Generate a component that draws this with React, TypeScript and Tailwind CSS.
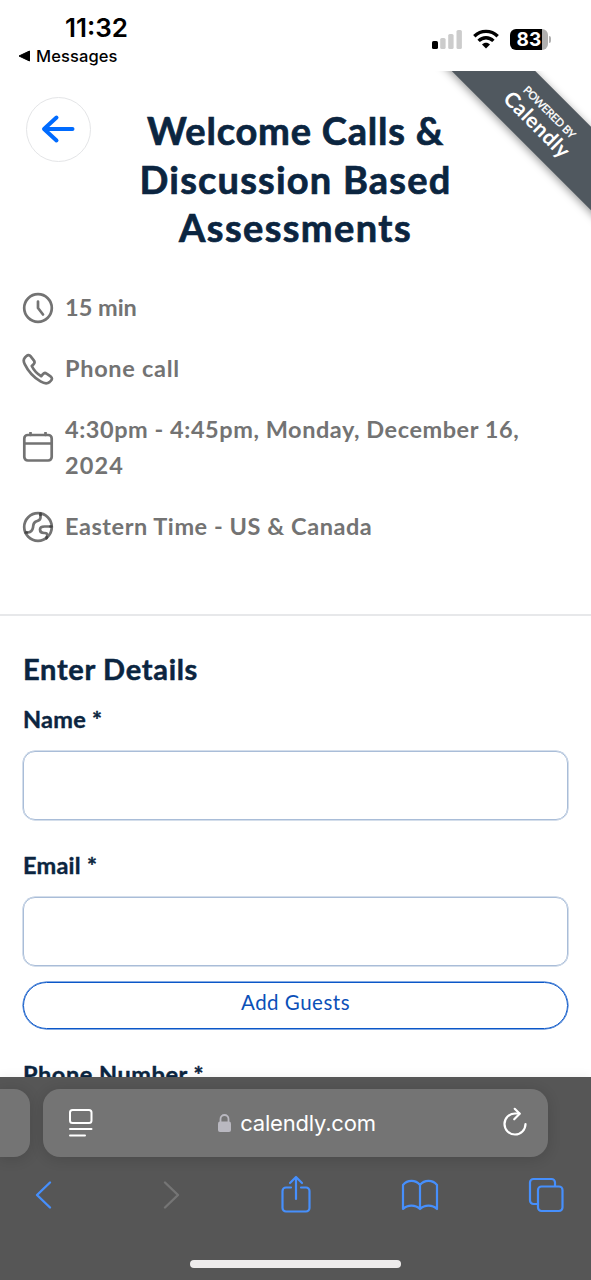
import type { ReactNode } from "react"

function StatusBar() {
  return (
    <div className="flex h-[71px] justify-between font-['Inter','Liberation_Sans',sans-serif] text-black">
      <div className="pl-[18px] pt-3">
        <div className="pl-[47px] text-[26px] leading-[31px] font-semibold">11:32</div>
        <div className="mt-[3px] flex items-center gap-[6px] text-[16.5px] leading-5 font-medium tracking-[0.1px]">
          <svg width="12" height="12" viewBox="0 0 12 12">
            <path d="M11.5 1v10L1 6z" fill="currentColor" stroke="currentColor" strokeLinejoin="round" />
          </svg>
          Messages
        </div>
      </div>
      <div className="flex items-start pr-10 pt-[28px]">
        <svg className="mt-[2px]" width="30" height="20" viewBox="0 0 30 20">
          <rect x="0" y="11" width="6" height="8" rx="1.6" fill="#000" />
          <rect x="8.2" y="8" width="5.4" height="11" rx="1.6" fill="#ccc" />
          <rect x="16.2" y="4" width="5.4" height="15" rx="1.6" fill="#ccc" />
          <rect x="24.5" y="0" width="5.4" height="19" rx="1.6" fill="#ccc" />
        </svg>
        <svg className="ml-[11px] mt-[1px]" width="26" height="20" viewBox="0 0 26 20" fill="none" stroke="#000" strokeWidth="3.4">
          <path d="M1.3 7.2C8 .8 18 .8 24.7 7.2" />
          <path d="M5.6 11.9c4.3-4.2 10.5-4.2 14.8 0" />
          <path d="M13 19.4l-4-4c2.2-2.3 5.8-2.3 8 0z" fill="#000" stroke="none" />
        </svg>
        <div className="ml-[11px] mt-[1px] flex h-[21px] w-[38px] items-center justify-center overflow-hidden rounded-[6px] bg-[linear-gradient(90deg,#000_84%,#b0b0b0_84%)] text-[19px] leading-none font-bold tracking-[0.3px] text-white">
          83
        </div>
        <div className="ml-[1px] mt-[8px] h-[7px] w-[2px] rounded-r-full bg-[#b0b0b0]" />
      </div>
    </div>
  )
}

function Ribbon() {
  return (
    <div className="absolute top-[71px] right-0 h-[200px] w-[200px] overflow-hidden">
      <div className="absolute top-[19px] left-[-9px] flex h-[59px] w-[320px] rotate-45 flex-col items-center justify-center bg-[#50585f] text-white shadow-[0_2px_9px_rgba(0,0,0,0.4)]">
        <span className="text-[11px] leading-[15px] font-medium tracking-[-0.3px] [-webkit-text-stroke:0.25px_currentColor]">POWERED BY</span>
        <span className="mb-[2px] text-[21px] leading-[20px] font-bold tracking-[0.4px]">Calendly</span>
      </div>
    </div>
  )
}

function Detail({ icon, children }: { icon: ReactNode; children: ReactNode }) {
  return (
    <div className="flex items-center">
      <svg className="mt-px shrink-0" width="32" height="32" viewBox="0 0 32 32" fill="none" stroke="currentColor" strokeWidth="2.7" strokeLinecap="round" strokeLinejoin="round">
        {icon}
      </svg>
      <div className="ml-[11px]">{children}</div>
    </div>
  )
}

function Field({ label }: { label: string }) {
  return (
    <label className="block">
      <span className="block h-9 text-[23.5px] leading-9 font-bold tracking-[0.25px] [-webkit-text-stroke:0.4px_currentColor]">{label}</span>
      <input className="mt-[14px] block h-[69px] w-full rounded-[12px] border border-[#a9bdd8] px-4 shadow-[0_0_0_0.5px_#a9bdd8] outline-none" />
    </label>
  )
}

function BrowserBar() {
  return (
    <div className="absolute inset-x-0 bottom-0 h-[203px] overflow-hidden bg-[#565656] font-['Inter','Liberation_Sans',sans-serif] shadow-[0_-1px_10px_rgba(0,0,0,0.06)]">
      <div className="mt-3 flex gap-[13px]">
        <div className="h-[68px] w-[30px] rounded-r-[16px] bg-[#747474] shadow-[0_2px_14px_rgba(0,0,0,0.14)]" />
        <div className="flex h-[68px] w-[505px] items-center rounded-[17px] bg-[#747474] pr-[21px] pl-[26px] text-white shadow-[0_2px_14px_rgba(0,0,0,0.14)]">
          <svg width="24" height="28" viewBox="0 0 24 28" fill="none" stroke="currentColor" strokeWidth="2" strokeLinecap="round">
            <rect x="1" y="1" width="21.5" height="13" rx="2.5" />
            <path d="M1 20h21.5M1 26.5h15" />
          </svg>
          <div className="flex flex-1 items-center justify-center pr-[2px] text-[22px] tracking-[-0.2px]">
            <svg className="mr-[9px]" width="13" height="18" viewBox="0 0 13 18">
              <path d="M2.5 9V5a4 4 0 0 1 8 0v4" fill="none" stroke="#b9b8c0" strokeWidth="1.8" />
              <rect y="7.5" width="13" height="10.5" rx="2" fill="#b9b8c0" />
            </svg>
            calendly.com
          </div>
          <svg className="-mt-[3px]" width="24" height="30" viewBox="0 0 24 30" fill="none" stroke="currentColor" strokeWidth="2.2" strokeLinecap="round" strokeLinejoin="round">
            <path d="M22.5 17A10.5 10.5 0 1 1 12 6.5h4.500" />
            <path d="M11.700 1.800l5 5-5.500 5.500" />
          </svg>
        </div>
      </div>
      <div className="mt-[18px] flex h-10 items-center justify-between pr-[27px] pl-[34px] text-[#468ffc]">
        <svg width="20" height="30" viewBox="0 0 20 30" fill="none" stroke="currentColor" strokeWidth="2.4" strokeLinecap="round" strokeLinejoin="round">
          <path d="M16 2.500L3 15l13 12.500" />
        </svg>
        <svg className="ml-[39px]" width="20" height="30" viewBox="0 0 20 30" fill="none" stroke="#757575" strokeWidth="2.4" strokeLinecap="round" strokeLinejoin="round">
          <path d="M3 2.500L16 15 3 27.500" />
        </svg>
        <svg className="-mt-[2px] ml-[30px]" width="30" height="38" viewBox="0 0 30 38" fill="none" stroke="currentColor" strokeWidth="2.2" strokeLinecap="round" strokeLinejoin="round">
          <path d="M10 12.500H5a3.500 3.500 0 0 0-3.500 3.500v17A3.500 3.500 0 0 0 5 36.500h20a3.500 3.500 0 0 0 3.500-3.500V16a3.500 3.500 0 0 0-3.500-3.500h-5M15 24V2M9 8l6-6 6 6" />
        </svg>
        <svg className="ml-[22px]" width="38" height="32" viewBox="0 0 38 32" fill="none" stroke="currentColor" strokeWidth="2.2" strokeLinejoin="round">
          <path d="M19 6C14.500.600 6.500.600 2 6v24c4.500-4.500 12.500-4.500 17 0 4.500-4.500 12.500-4.500 17 0V6C31.500.600 23.500.600 19 6zM19 6v24" />
        </svg>
        <svg className="ml-[20px]" width="36" height="36" viewBox="0 0 36 36" fill="none" stroke="currentColor" strokeWidth="2.2">
          <path d="M9.500 27H5.500A3.500 3.500 0 0 1 2 23.500v-18A3.500 3.500 0 0 1 5.500 2h18A3.500 3.500 0 0 1 27 5.500v4" />
          <rect x="10" y="9.5" width="24.5" height="24.5" rx="3.5" />
        </svg>
      </div>
      <div className="mx-auto mt-[45px] h-2 w-[211px] rounded-full bg-[#eeecec]" />
    </div>
  )
}

export default function App() {
  return (
    <div className="relative h-[1280px] w-[591px] overflow-hidden bg-white font-['Lato','Open_Sans',sans-serif] text-[#0b2540]">
      <StatusBar />
      <Ribbon />
      <div className="flex h-[185px] pt-[26px] pl-[26px]">
        <button className="flex h-[65px] w-[65px] items-center justify-center rounded-full border-[1.5px] border-[#e4e5e7]">
          <svg className="-mt-[2px] -ml-[2px]" width="34" height="30" viewBox="0 0 34 30" fill="none" stroke="#006bff" strokeWidth="4" strokeLinecap="round" strokeLinejoin="round">
            <path d="M15.5 3.5L3 15l12.5 11.5M4 15h27.5" />
          </svg>
        </button>
        <h1 className="mt-[9px] ml-[24px] flex w-[361px] flex-col text-center text-[38px] leading-[48.6px] font-bold [-webkit-text-stroke:0.7px_currentColor]">
          <span className="tracking-[0.8px]">Welcome Calls &amp;</span>
          <span className="tracking-[1.2px]">Discussion Based</span>
          <span className="tracking-[1.4px]">Assessments</span>
        </h1>
      </div>
      <div className="flex h-[360px] flex-col gap-[25px] border-b-2 border-[#e7e8ea] pt-[33px] pl-[22px] text-[23.5px] leading-9 font-bold tracking-[0.55px] text-[#737373]">
        <Detail icon={<><circle cx="16" cy="16" r="13.8" /><path d="M16 9.500v6.500l5 6.500" /></>}>
          <div className="tracking-[0px]">15 min</div>
        </Detail>
        <Detail icon={<path d="M19.300 23.200c-4-2.200-7.500-6-9.500-10.200l1.800-1.800c1.200-1.200 1.200-2.500.200-3.800L8.500 3.200C7.500 1.900 5.800 1.800 4.600 2.900L3 4.500c-1.600 1.700-1.500 4.300-.3 6.600 3.400 7 9 13.200 15.800 17.300 3 1.800 6.600 2.600 9 .7l1.500-1.500c1.300-1.200 1.200-2.900-.1-3.900l-4.300-3c-1.300-1-2.600-.8-3.700.4z" />}>
          <div className="tracking-[0.7px]">Phone call</div>
        </Detail>
        <Detail icon={<><rect x="2.3" y="3" width="27.4" height="25.5" rx="3.5" /><path d="M2.500 11.500h27M8.500 .8V3M23.500 .8V3" /></>}>
          <div>4:30pm - 4:45pm, Monday, December 16,</div>
          <div className="tracking-[1.1px]">2024</div>
        </Detail>
        <Detail
          icon={
            <>
              <circle cx="16" cy="16" r="13.8" />
              <path d="M18.500 3v3.500c0 3-2 3-4.500 4-3 1.300-2.500 3-3 6s-1.500 4.500-5 5H3.500M29.500 15.500h-7c-3 0-4.500 1-4.500 3 0 3 1.500 3.500 4 3.500h1c2.500 0 3 2 1.500 5" />
              <path d="M18.500 2.500v1.500M3.800 21.500h1M28.500 15.500h1M24.500 27l.3-.8" stroke="#454545" />
            </>
          }
        >
          Eastern Time - US &amp; Canada
        </Detail>
      </div>
      <div className="px-[23px] pt-[33px]">
        <h2 className="h-[52px] text-[29px] leading-[40px] font-bold tracking-[0.7px] [-webkit-text-stroke:0.5px_currentColor]">Enter Details</h2>
        <Field label="Name *" />
        <div className="mt-[27px]">
          <Field label="Email *" />
        </div>
        <button className="mt-4 block h-[47px] w-full rounded-full border border-[#0b57c8] pb-[6px] text-[20.5px] leading-none tracking-[0.5px] text-[#0b50b8] shadow-[0_0_0_0.5px_#0b57c8]">
          Add Guests
        </button>
        <div className="mt-[27px] text-[23.5px] leading-9 font-bold tracking-[0.55px] [-webkit-text-stroke:0.4px_currentColor]">Phone Number *</div>
      </div>
      <BrowserBar />
    </div>
  )
}
